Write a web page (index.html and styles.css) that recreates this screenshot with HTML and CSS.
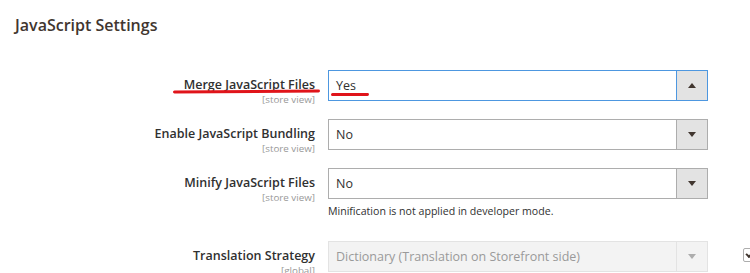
FILE: index.html
```html
<!DOCTYPE html>
<html lang="en">
<head>
  <meta charset="UTF-8">
  <meta name="viewport" content="width=device-width, initial-scale=1.0">
  <title>JavaScript Settings</title>
  <link rel="stylesheet" href="styles.css">
</head>
<body>
  <section class="config">
    <h2 class="config-title">JavaScript Settings</h2>

    <div class="field">
      <div class="label">
        <span class="label-text mark">Merge JavaScript Files</span>
        <span class="scope">[store view]</span>
      </div>
      <div class="control">
        <div class="select focused">
          <span class="value"><span class="mark mark-short">Yes</span></span>
          <span class="arrow up"></span>
        </div>
      </div>
      <div class="extra"></div>
    </div>

    <div class="field">
      <div class="label">
        <span class="label-text">Enable JavaScript Bundling</span>
        <span class="scope">[store view]</span>
      </div>
      <div class="control">
        <div class="select">
          <span class="value">No</span>
          <span class="arrow"></span>
        </div>
      </div>
      <div class="extra"></div>
    </div>

    <div class="field">
      <div class="label">
        <span class="label-text">Minify JavaScript Files</span>
        <span class="scope">[store view]</span>
      </div>
      <div class="control">
        <div class="select">
          <span class="value">No</span>
          <span class="arrow"></span>
        </div>
        <p class="note">Minification is not applied in developer mode.</p>
      </div>
      <div class="extra"></div>
    </div>

    <div class="field field-last">
      <div class="label">
        <span class="label-text">Translation Strategy</span>
        <span class="scope">[global]</span>
      </div>
      <div class="control">
        <div class="select disabled">
          <span class="value">Dictionary (Translation on Storefront side)</span>
          <span class="arrow"></span>
        </div>
      </div>
      <div class="extra">
        <span class="checkbox"></span>
      </div>
    </div>
  </section>
</body>
</html>
```

FILE: styles.css
```css
body {
  margin: 0;
  background-color: #fff;
  color: #303030;
  font-family: "Open Sans", "Noto Sans", sans-serif;
  overflow: hidden;
}
.config {
  padding: 14px 0 0 15px;
}
.config-title {
  margin: 0 0 34px 0;
  font-size: 16px;
  font-weight: 600;
  line-height: 22px;
  color: #41362f;
}
.field {
  display: grid;
  grid-template-columns: 300px 380px 42px;
  column-gap: 13px;
  margin-bottom: 13px;
}
.field-last {
  margin-top: 23px;
}
.label {
  display: flex;
  flex-direction: column;
  align-items: flex-end;
  padding-top: 6px;
}
.label-text {
  font-size: 12.5px;
  font-weight: 600;
  line-height: 18px;
  color: #303030;
  position: relative;
}
.scope {
  font-size: 9.8px;
  line-height: 12px;
  color: #999;
}
.select {
  display: flex;
  height: 29px;
  border: 1px solid #adadad;
  background-color: #fff;
}
.select .value {
  flex: 1;
  padding-left: 7px;
  font-size: 12.5px;
  line-height: 29px;
  color: #303030;
  white-space: nowrap;
}
.select.focused {
  border-color: #4d97e0;
}
.arrow {
  width: 30px;
  border-left: 1px solid #adadad;
  background-color: #e3e3e3;
  position: relative;
}
.focused .arrow {
  border-left-color: #4d97e0;
}
.arrow::after {
  content: "";
  position: absolute;
  left: 11px;
  top: 12px;
  border-left: 4px solid transparent;
  border-right: 4px solid transparent;
  border-top: 5px solid #41362f;
}
.arrow.up::after {
  border-top: none;
  border-bottom: 5px solid #41362f;
}
.select.disabled {
  border-color: #e3e3e3;
  background-color: #f3f3f3;
}
.disabled .value {
  color: #9a9a9a;
}
.disabled .arrow {
  border-left-color: #e3e3e3;
  background-color: #f3f3f3;
}
.disabled .arrow::after {
  border-top-color: #adadad;
}
.note {
  margin: 5px 0 0 0;
  font-size: 10.6px;
  line-height: 14px;
  color: #303030;
}
.extra {
  display: flex;
  justify-content: flex-start;
  padding: 7px 0 0 22px;
}
.checkbox {
  width: 12px;
  height: 12px;
  border: 1px solid #adadad;
  border-radius: 2px;
  background-color: #fff;
  position: relative;
}
.checkbox::after {
  content: "";
  position: absolute;
  left: 2px;
  top: 2px;
  width: 6px;
  height: 3px;
  border-left: 2px solid #41362f;
  border-bottom: 2px solid #41362f;
  transform: rotate(-45deg);
}
/* red hand-drawn underlines */
.mark {
  position: relative;
}
.mark::after {
  content: "";
  position: absolute;
  left: -11px;
  right: -5px;
  bottom: 1px;
  height: 3px;
  border-radius: 2px;
  background-color: #e0141a;
  transform: rotate(-0.4deg);
}
.mark-short::after {
  left: -5px;
  right: -13px;
  bottom: -2px;
}
```
